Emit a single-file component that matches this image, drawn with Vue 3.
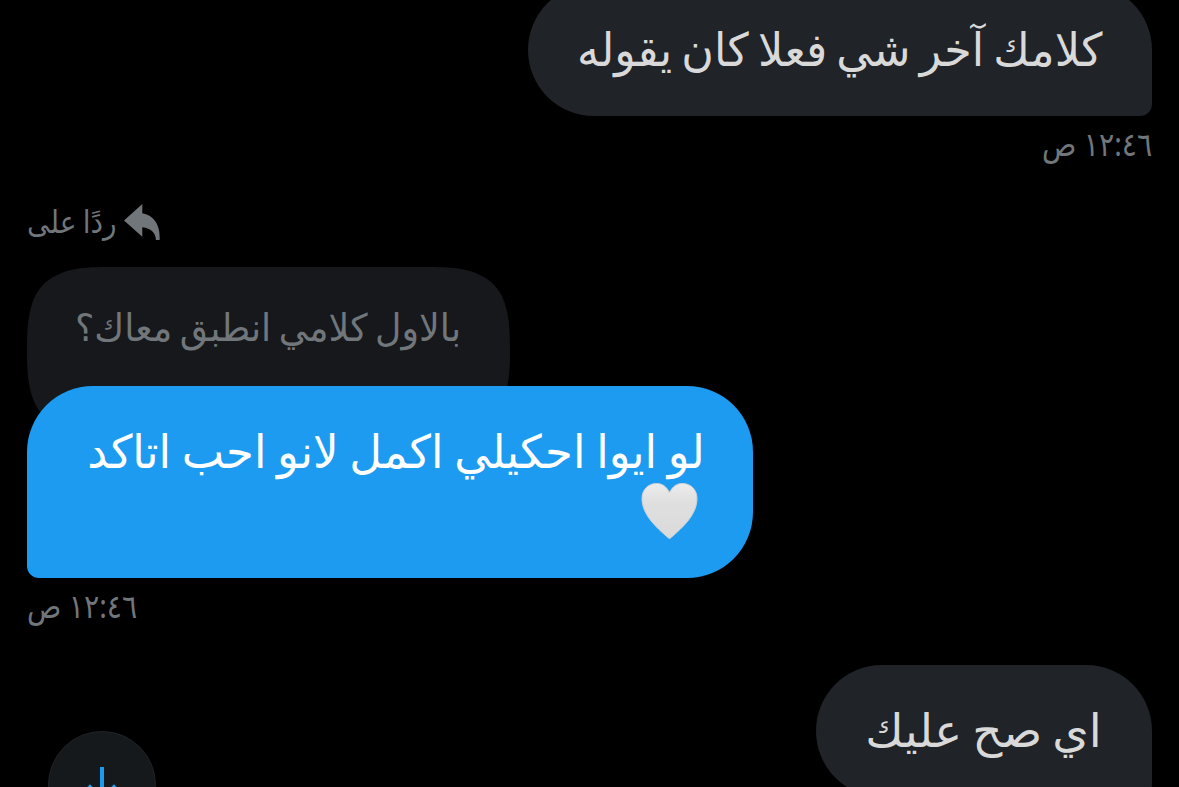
<template>
  <main class="chat">
    <section class="message received">
      <div class="bubble bubble-first">
        <span class="text text-first">كلامك آخر شي فعلا كان يقوله</span>
      </div>
      <time class="time">١٢:٤٦ ص</time>
    </section>

    <section class="message sent">
      <div class="reply-label">
        <svg class="reply-icon" viewBox="0 0 36 36">
          <path d="M0 16.5 18.3 0v9.3C29.5 11 36.5 20.5 35.6 36H32C31.5 28.5 27 24.5 18.3 23.3V32.7Z" />
        </svg>
        <span class="label-text">ردًا على</span>
      </div>
      <div class="quote">
        <svg class="quote-shape" viewBox="0 0 483 166">
          <path
            d="M80 0H403C433 0 448 3 463.5 14.5C477 26 483 44 483 80V86C483 122 477 140 463.5 151.5C448 163 433 166 403 166H80C50 166 35 163 19.5 151.5C6 140 0 122 0 86V80C0 44 6 26 19.5 14.5C35 3 50 0 80 0Z"
          />
        </svg>
        <span class="quote-text">بالاول كلامي انطبق معاك؟</span>
      </div>
      <div class="bubble bubble-sent">
        <span class="text text-sent">لو ايوا احكيلي اكمل لانو احب اتاكد</span>
        <svg class="heart" viewBox="0 0 56 56">
          <defs>
            <linearGradient id="heart-fill" x1="0" y1="0" x2="0" y2="1">
              <stop offset="0" stop-color="#ececec" />
              <stop offset="0.35" stop-color="#dfdfdf" />
              <stop offset="1" stop-color="#dadada" />
            </linearGradient>
          </defs>
          <path
            d="M28 9.5C24.5 3 20.5 0.5 15 0.5C6.5 0.5 0.5 7 0.5 15.5C0.5 31 13.5 43.5 27 55C27.6 55.5 28.4 55.5 29 55C42.5 43.5 55.5 31 55.5 15.5C55.5 7 49.5 0.5 41 0.5C35.5 0.5 31.5 3 28 9.5Z"
            fill="url(#heart-fill)"
            stroke="#cfd2d5"
          />
        </svg>
      </div>
      <time class="time">١٢:٤٦ ص</time>
    </section>

    <section class="message received">
      <div class="bubble bubble-last">
        <span class="text text-last">اي صح عليك</span>
      </div>
    </section>

    <button class="scroll-down">
      <svg class="arrow" viewBox="0 0 40 40">
        <path d="M20 0V32M6.6 18.7 20 32 33.4 18.7" />
      </svg>
    </button>
  </main>
</template>

<script setup></script>

<style scoped>
.chat {
  position: relative;
  width: 1179px;
  height: 787px;
  overflow: hidden;
  box-sizing: border-box;
  padding: 0 27px;
  background: #000;
  direction: rtl;
  font-family: 'Noto Sans', 'DejaVu Sans', sans-serif;
  white-space: nowrap;
}
.message {
  display: flex;
  flex-direction: column;
  align-items: flex-start;
}
.sent {
  align-items: flex-end;
}
.bubble {
  box-sizing: border-box;
  display: flex;
  flex-direction: column;
  align-items: flex-start;
  height: 132px;
  padding: 34px 50px 0;
  border-radius: 66px 66px 12px 66px;
  background: #202327;
  color: #d9d9d9;
}
.bubble-first {
  width: 624px;
  margin-top: -16px;
}
.bubble-last {
  width: 336px;
}
.bubble-sent {
  width: 726px;
  height: 192px;
  padding-right: 48px;
  border-radius: 66px 66px 66px 12px;
  background: #1d9bf0;
  color: #fff;
  /* keeps the bubble above the quoted message it overlaps */
  z-index: 1;
}
.text {
  font-size: 46px;
  line-height: 60px;
  transform-origin: right center;
}
.text-first {
  word-spacing: -2.5px;
  transform: scaleX(0.967);
}
.text-sent {
  word-spacing: -1px;
  transform: scaleX(0.979);
}
.text-last {
  word-spacing: -2px;
  transform: scaleX(1.016);
}
.heart {
  width: 57px;
  height: 56px;
  margin: 3px 7px 0 0;
}
.time {
  height: 87px;
  color: #71767b;
  font-size: 33px;
  line-height: 55px;
  transform: scaleX(0.86);
  transform-origin: right center;
}
.sent .time {
  transform-origin: left center;
}
.reply-label {
  display: flex;
  align-items: center;
  height: 40px;
  margin-bottom: 24px;
  color: #71767b;
}
.reply-icon {
  width: 36px;
  height: 36px;
  margin-bottom: 2px;
  fill: currentColor;
}
.label-text {
  margin: 0 -2px 4px 0;
  font-size: 31px;
  line-height: 40px;
  word-spacing: -1px;
  transform: scaleX(0.905);
  transform-origin: left center;
}
.quote {
  position: relative;
  box-sizing: border-box;
  width: 483px;
  height: 119px;
  padding: 34px 49px 0;
}
.quote-shape {
  position: absolute;
  top: 0;
  left: 0;
  width: 483px;
  height: 166px;
  fill: #16181c;
}
.quote-text {
  position: relative;
  display: block;
  color: #71767b;
  font-size: 38px;
  line-height: 50px;
  word-spacing: -2px;
  transform: scaleX(0.957);
  transform-origin: right center;
}
.scroll-down {
  position: absolute;
  top: 731px;
  left: 48px;
  box-sizing: border-box;
  display: flex;
  justify-content: center;
  width: 108px;
  height: 108px;
  padding: 35px 0 0;
  border: 1px solid #202427;
  border-radius: 50%;
  background: #16191c;
}
.arrow {
  width: 40px;
  height: 40px;
  fill: none;
  stroke: #1d9bf0;
  stroke-width: 4;
}
</style>

<style>
body {
  background: #000;
}
</style>
